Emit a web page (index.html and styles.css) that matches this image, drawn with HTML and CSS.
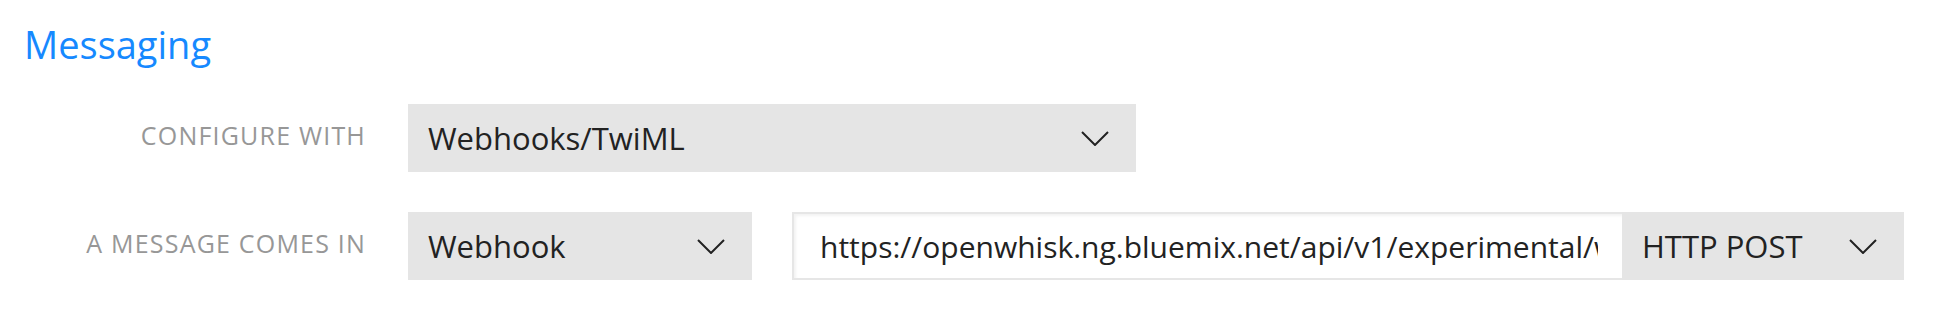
FILE: index.html
```html
<!DOCTYPE html>
<html>
<head>
<meta charset="utf-8">
<link rel="stylesheet" href="styles.css">
</head>
<body>
<section class="panel">
  <h2 class="title">Messaging</h2>
  <div class="rows">
    <div class="row">
      <div class="label">CONFIGURE WITH</div>
      <div class="select wide"><span>Webhooks/TwiML</span><svg class="chev" viewBox="0 0 28 15"><polyline points="1,1 14,14 27,1"/></svg></div>
    </div>
    <div class="row">
      <div class="label">A MESSAGE COMES IN</div>
      <div class="select narrow"><span>Webhook</span><svg class="chev" viewBox="0 0 28 15"><polyline points="1,1 14,14 27,1"/></svg></div>
      <div class="combo">
        <div class="input"><span class="url">https://openwhisk.ng.bluemix.net/api/v1/experimental/w</span></div>
        <div class="select method"><span>HTTP POST</span><svg class="chev" viewBox="0 0 28 15"><polyline points="1,1 14,14 27,1"/></svg></div>
      </div>
    </div>
  </div>
</section>
</body>
</html>
```

FILE: styles.css
```css
html, body {
  margin: 0;
  padding: 0;
  background: #ffffff;
}
.panel {
  padding: 20px 0 0 24px;
  font-family: "Open Sans", "Liberation Sans", sans-serif;
}
.title {
  margin: 0;
  font-weight: 400;
  font-size: 38px;
  line-height: 48px;
  color: #1689ff;
}
.rows {
  margin-top: 36px;
  display: flex;
  flex-direction: column;
  gap: 40px;
}
.row {
  display: flex;
  align-items: center;
}
.label {
  width: 342px;
  text-align: right;
  font-size: 25px;
  letter-spacing: 1.2px;
  color: #979797;
  margin-right: 42px;
  padding-bottom: 6px;
}
.select {
  box-sizing: border-box;
  height: 68px;
  background: #e5e5e5;
  display: flex;
  align-items: center;
  justify-content: space-between;
  padding: 0 27px 0 20px;
  font-size: 31px;
  color: #222222;
}
.wide { width: 728px; }
.narrow { width: 344px; }
.method { width: 282px; flex: none; }
.chev {
  width: 28px;
  height: 15px;
  fill: none;
  stroke: #222222;
  stroke-width: 2;
}
.combo {
  display: flex;
  margin-left: 40px;
}
.input {
  box-sizing: border-box;
  width: 830px;
  height: 68px;
  border: 2px solid #e6e6e6;
  border-right: none;
  box-shadow: inset 2px 2px 3px rgba(0,0,0,0.05);
  background: #fff;
  padding: 0 0 0 26px;
  display: flex;
  align-items: center;
  overflow: hidden;
  white-space: nowrap;
  font-size: 30px;
  color: #222222;
}
.url {
  display: block;
  width: 778px;
  overflow: hidden;
  text-overflow: clip;
}
```
